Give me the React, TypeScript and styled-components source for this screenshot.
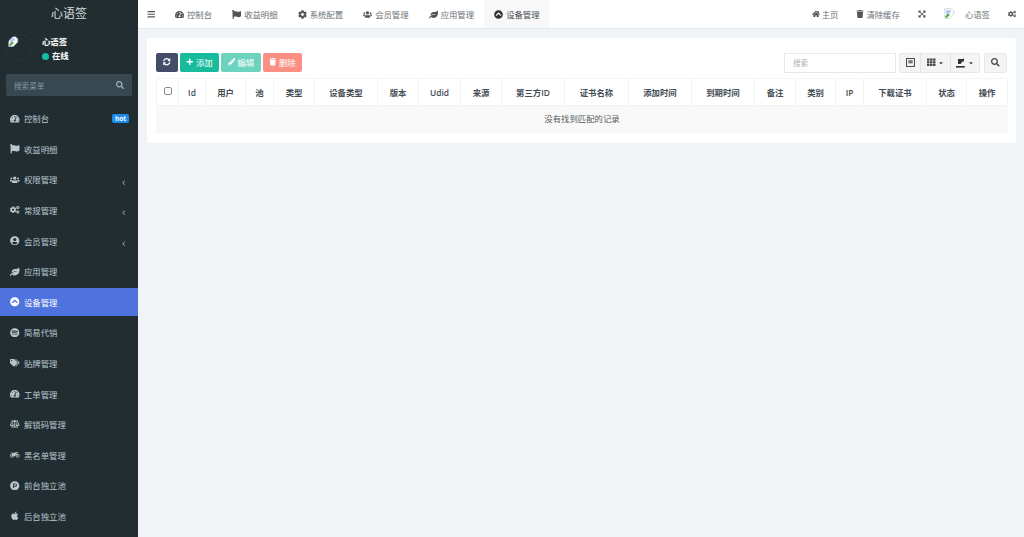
import React from 'react';
import styled, { createGlobalStyle } from 'styled-components';
import type { IconType } from 'react-icons';
import {
  FaApple,
  FaBalanceScale,
  FaBars,
  FaCaretDown,
  FaChevronCircleUp,
  FaChevronLeft,
  FaCog,
  FaCogs,
  FaExpandArrowsAlt,
  FaFlag,
  FaHome,
  FaLeaf,
  FaMotorcycle,
  FaPencilAlt,
  FaPlus,
  FaProductHunt,
  FaSearch,
  FaSpotify,
  FaSyncAlt,
  FaTachometerAlt,
  FaTags,
  FaTh,
  FaTrash,
  FaUserCircle,
  FaUsers,
} from 'react-icons/fa';

const GlobalStyle = createGlobalStyle`
  html, body {
    margin: 0;
    padding: 0;
    height: 100%;
    overflow: hidden;
  }
  body {
    font-family: "Open Sans", "Noto Sans CJK SC", sans-serif;
    font-size: 8.4px;
    color: #444c54;
    background: #f1f4f6;
  }
`;

const Page = styled.div`
  display: flex;
  width: 1024px;
  height: 537px;
  overflow: hidden;
`;

const Sidebar = styled.aside`
  width: 138px;
  flex: none;
  background: #222d32;
  color: #b8c7ce;
`;

const Logo = styled.div`
  height: 28px;
  line-height: 27px;
  text-align: center;
  font-size: 12px;
  color: #d6dcdf;
`;

const UserPanel = styled.div`
  display: flex;
  align-items: flex-start;
  height: 46px;
  padding: 6px 0 0 6px;
  box-sizing: border-box;
`;

const AvatarRing = styled.div`
  width: 27px;
  height: 27px;
  flex: none;
  padding: 1px 0 0 1px;
  border-radius: 50%;
  overflow: hidden;
  border: 1px dashed #2e3a40;
  box-sizing: border-box;
`;

const UserText = styled.div`
  margin: 1px 0 0 9px;
  color: #fff;
  font-size: 8.4px;
  font-weight: 600;
  line-height: 14px;
`;

const OnlineRow = styled.div`
  display: flex;
  align-items: center;
  gap: 3px;
`;

const OnlineDot = styled.span`
  width: 7px;
  height: 7px;
  border-radius: 50%;
  background: #18bc9c;
`;

const SideSearch = styled.div`
  display: flex;
  align-items: center;
  justify-content: space-between;
  height: 22px;
  margin: 0 6px;
  padding: 0 8px;
  border-radius: 2px;
  background: #374850;
  color: #87979f;
  font-size: 7.6px;
  svg {
    font-size: 8px;
    color: #a4b2b9;
  }
`;

const Menu = styled.nav`
  margin-top: 8px;
`;

const MenuRow = styled.div<{ $active?: boolean }>`
  display: flex;
  align-items: center;
  height: 28.6px;
  margin-bottom: 2px;
  padding: 0 9px 0 9px;
  box-sizing: border-box;
  font-size: 8.4px;
  color: ${({ $active }) => ($active ? '#fff' : '#b8c7ce')};
  background: ${({ $active }) => ($active ? '#4e73df' : 'transparent')};
`;

const MenuIcon = styled.span`
  display: inline-flex;
  justify-content: center;
  width: 12px;
  margin-right: 3px;
  font-size: 9.5px;
`;

const MenuLabel = styled.span`
  flex: 1;
`;

const HotBadge = styled.span`
  padding: 0 3px;
  border-radius: 2px;
  background: #1d8ceb;
  color: #fff;
  font-size: 6.5px;
  font-weight: 700;
  line-height: 9px;
`;

const Arrow = styled(FaChevronLeft)`
  font-size: 5.5px;
  color: #8a989f;
  margin: 6px 3px 0 0;
`;

const Main = styled.main`
  flex: 1;
  min-width: 0;
`;

const Navbar = styled.header`
  display: flex;
  align-items: stretch;
  height: 29px;
  box-sizing: border-box;
  background: #fff;
  border-bottom: 1px solid #e4e8ec;
`;

const NavToggle = styled.div`
  display: flex;
  align-items: center;
  justify-content: center;
  width: 27px;
  color: #555;
  font-size: 8.5px;
`;

const Tabs = styled.div`
  display: flex;
  flex: 1;
`;

const Tab = styled.div<{ $active?: boolean }>`
  display: flex;
  align-items: center;
  gap: 3px;
  height: 28px;
  padding: 0 10px;
  font-size: 8.4px;
  color: ${({ $active }) => ($active ? '#444c54' : '#6b7278')};
  background: ${({ $active }) => ($active ? '#f8f8f8' : 'transparent')};
  svg {
    width: 9px;
    height: 9px;
    color: ${({ $active }) => ($active ? '#333' : '#555')};
  }
`;

const NavRight = styled.div`
  display: flex;
  align-items: center;
  padding-right: 8px;
  font-size: 8.4px;
  color: #6b7278;
  svg {
    width: 8px;
    height: 8px;
    color: #555;
  }
`;

const NavItem = styled.div<{ $gap: number }>`
  display: flex;
  align-items: center;
  gap: 2px;
  margin-right: ${({ $gap }) => $gap}px;
`;

const NavAvatar = styled.div`
  display: flex;
  margin-right: 7px;
  svg {
    width: 12px;
    height: 12px;
    color: inherit;
  }
`;

const Content = styled.div`
  padding: 9px 8px 0 9px;
`;

const Card = styled.section`
  height: 105px;
  padding: 15px 9px 0;
  box-sizing: border-box;
  border-radius: 2px;
  background: #fff;
`;

const Toolbar = styled.div`
  display: flex;
  align-items: center;
  height: 19px;
  gap: 2px;
`;

const Button = styled.div<{ $bg: string; $width: number }>`
  display: flex;
  align-items: center;
  justify-content: center;
  gap: 2px;
  width: ${({ $width }) => $width}px;
  height: 19px;
  padding-bottom: 1px;
  box-sizing: border-box;
  border-radius: 2px;
  background: ${({ $bg }) => $bg};
  color: #fff;
  font-size: 8.4px;
  svg {
    font-size: 7.5px;
  }
`;

const SearchInput = styled.div`
  display: flex;
  align-items: center;
  width: 112px;
  height: 20px;
  margin-left: auto;
  padding-left: 8px;
  box-sizing: border-box;
  border: 1px solid #e6e9eb;
  color: #a9afb4;
  font-size: 7.5px;
`;

const ToolGroup = styled.div<{ $offset: number }>`
  display: flex;
  margin-left: ${({ $offset }) => $offset}px;
  border: 1px solid #e8e8e8;
  border-radius: 2px;
  background: #f4f4f4;
`;

const ToolButton = styled.div<{ $width: number }>`
  display: flex;
  align-items: center;
  justify-content: center;
  gap: 2px;
  width: ${({ $width }) => $width}px;
  height: 18px;
  color: #444;
  font-size: 8.5px;
  & + & {
    border-left: 1px solid #e4e4e4;
  }
`;

const Caret = styled(FaCaretDown)`
  font-size: 6px;
`;

const DeviceTable = styled.table`
  width: 851px;
  margin-top: 6px;
  table-layout: fixed;
  border-collapse: collapse;
`;

const HeadCell = styled.th`
  height: 26px;
  padding: 0;
  border: 1px solid #f4f4f4;
  color: #444c54;
  font-size: 8.4px;
  font-weight: 600;
  text-align: center;
`;

const Checkbox = styled.span`
  display: inline-block;
  width: 6px;
  height: 6px;
  border: 1px solid #8c8c8c;
  border-radius: 2px;
  background: #fff;
  vertical-align: 1px;
`;

const EmptyCell = styled.td`
  height: 28px;
  padding: 0 0 4px;
  box-sizing: border-box;
  border: 1px solid #f8f8f8;
  background: #f8f8f8;
  color: #555c62;
  font-size: 8.4px;
  text-align: center;
`;

const BrokenImage = ({ size }: { size: number }) => (
  <svg width={size} height={size} viewBox="0 0 16 16" style={{ display: 'block' }}>
    <path d="M1 1h9l3 3v4l-6 6H1z" fill="#fff" stroke="#b9c0c4" strokeWidth="0.8" />
    <path d="M2 11l3-4 3 2-4 4H2z" fill="#5aa84a" />
    <path d="M3 3h6v3l-5 2H3z" fill="#a9c6ee" />
  </svg>
);

const ToggleViewIcon = () => (
  <svg width="9" height="9" viewBox="0 0 10 10">
    <rect x="0.6" y="0.6" width="8.8" height="8.8" fill="none" stroke="#444" strokeWidth="1.1" />
    <rect x="2.6" y="2.4" width="4.8" height="3.6" fill="#777" />
  </svg>
);

const ExportIcon = () => (
  <svg width="10" height="10" viewBox="0 0 10 10">
    <path d="M2 1h5L8 0v4L7 3 4.5 6H2z" fill="#333" />
    <path d="M0 8h8.8v1.6H0z" fill="#333" />
  </svg>
);

const menuItems: { label: string; icon: IconType; hot?: boolean; arrow?: boolean; active?: boolean }[] = [
  { label: '控制台', icon: FaTachometerAlt, hot: true },
  { label: '收益明细', icon: FaFlag },
  { label: '权限管理', icon: FaUsers, arrow: true },
  { label: '常规管理', icon: FaCogs, arrow: true },
  { label: '会员管理', icon: FaUserCircle, arrow: true },
  { label: '应用管理', icon: FaLeaf },
  { label: '设备管理', icon: FaChevronCircleUp, active: true },
  { label: '简易代销', icon: FaSpotify },
  { label: '贴牌管理', icon: FaTags },
  { label: '工单管理', icon: FaTachometerAlt },
  { label: '解锁码管理', icon: FaBalanceScale },
  { label: '黑名单管理', icon: FaMotorcycle },
  { label: '前台独立池', icon: FaProductHunt },
  { label: '后台独立池', icon: FaApple },
];

const tabs: { label: string; icon: IconType; active?: boolean }[] = [
  { label: '控制台', icon: FaTachometerAlt },
  { label: '收益明细', icon: FaFlag },
  { label: '系统配置', icon: FaCog },
  { label: '会员管理', icon: FaUsers },
  { label: '应用管理', icon: FaLeaf },
  { label: '设备管理', icon: FaChevronCircleUp, active: true },
];

const columns: [string, number][] = [
  ['Id', 27],
  ['用户', 40],
  ['池', 28],
  ['类型', 41],
  ['设备类型', 63],
  ['版本', 41],
  ['Udid', 42],
  ['来源', 41],
  ['第三方ID', 63],
  ['证书名称', 64],
  ['添加时间', 63],
  ['到期时间', 63],
  ['备注', 41],
  ['类别', 40],
  ['IP', 28],
  ['下载证书', 63],
  ['状态', 40],
  ['操作', 41],
];

export default function App() {
  return (
    <Page>
      <GlobalStyle />
      <Sidebar>
        <Logo>心语签</Logo>
        <UserPanel>
          <AvatarRing>
            <BrokenImage size={12} />
          </AvatarRing>
          <UserText>
            <div>心语签</div>
            <OnlineRow>
              <OnlineDot />
              在线
            </OnlineRow>
          </UserText>
        </UserPanel>
        <SideSearch>
          搜索菜单
          <FaSearch />
        </SideSearch>
        <Menu>
          {menuItems.map(({ label, icon: Icon, hot, arrow, active }) => (
            <MenuRow key={label} $active={active}>
              <MenuIcon>
                <Icon />
              </MenuIcon>
              <MenuLabel>{label}</MenuLabel>
              {hot && <HotBadge>hot</HotBadge>}
              {arrow && <Arrow />}
            </MenuRow>
          ))}
        </Menu>
      </Sidebar>
      <Main>
        <Navbar>
          <NavToggle>
            <FaBars />
          </NavToggle>
          <Tabs>
            {tabs.map(({ label, icon: Icon, active }) => (
              <Tab key={label} $active={active}>
                <Icon />
                {label}
              </Tab>
            ))}
          </Tabs>
          <NavRight>
            <NavItem $gap={18}>
              <FaHome />
              主页
            </NavItem>
            <NavItem $gap={18}>
              <FaTrash />
              清除缓存
            </NavItem>
            <NavItem $gap={18}>
              <FaExpandArrowsAlt />
            </NavItem>
            <NavItem $gap={18}>
              <NavAvatar>
                <BrokenImage size={12} />
              </NavAvatar>
              心语签
            </NavItem>
            <NavItem $gap={0}>
              <FaCogs />
            </NavItem>
          </NavRight>
        </Navbar>
        <Content>
          <Card>
            <Toolbar>
              <Button $bg="#444c69" $width={22}>
                <FaSyncAlt />
              </Button>
              <Button $bg="#18bc9c" $width={39}>
                <FaPlus />
                添加
              </Button>
              <Button $bg="#6cd3bf" $width={40}>
                <FaPencilAlt />
                编辑
              </Button>
              <Button $bg="#fc8f83" $width={39}>
                <FaTrash />
                删除
              </Button>
              <SearchInput>搜索</SearchInput>
              <ToolGroup $offset={1}>
                <ToolButton $width={20}>
                  <ToggleViewIcon />
                </ToolButton>
                <ToolButton $width={29}>
                  <FaTh />
                  <Caret />
                </ToolButton>
                <ToolButton $width={28}>
                  <ExportIcon />
                  <Caret />
                </ToolButton>
              </ToolGroup>
              <ToolGroup $offset={2}>
                <ToolButton $width={21}>
                  <FaSearch />
                </ToolButton>
              </ToolGroup>
            </Toolbar>
            <DeviceTable>
              <colgroup>
                <col style={{ width: 22 }} />
                {columns.map(([name, width]) => (
                  <col key={name} style={{ width }} />
                ))}
              </colgroup>
              <thead>
                <tr>
                  <HeadCell>
                    <Checkbox />
                  </HeadCell>
                  {columns.map(([name]) => (
                    <HeadCell key={name}>{name}</HeadCell>
                  ))}
                </tr>
              </thead>
              <tbody>
                <tr>
                  <EmptyCell colSpan={columns.length + 1}>没有找到匹配的记录</EmptyCell>
                </tr>
              </tbody>
            </DeviceTable>
          </Card>
        </Content>
      </Main>
    </Page>
  );
}
